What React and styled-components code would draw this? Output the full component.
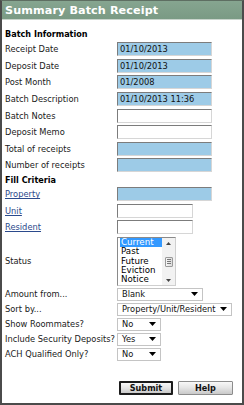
import React from "react";
import styled, { createGlobalStyle } from "styled-components";

const Global = createGlobalStyle`
  html, body { margin: 0; padding: 0; background: #fff; }
  body { font-family: "DejaVu Sans", Verdana, sans-serif; }
`;

const Panel = styled.div`
  box-sizing: border-box;
  width: 244px;
  height: 405px;
  border: 2px solid #4b4b4b;
  border-top: 1px solid #5e6e62;
  display: flex;
  flex-direction: column;
  background: #fff;
`;

const Header = styled.div`
  height: 18px;
  flex: none;
  background: linear-gradient(#86a590, #7a9a84);
  border-bottom: 1px solid #c9d4cc;
  color: #fff;
  font-weight: bold;
  font-size: 11.2px;
  display: flex;
  align-items: center;
  padding-left: 3px;
  letter-spacing: 0.1px;
`;

const Form = styled.div`
  padding: 7px 0 0 3px;
  display: flex;
  flex-direction: column;
  font-size: 8.3px;
  color: #1a1a1a;
`;

const Row = styled.div`
  display: flex;
  align-items: center;
  height: ${(p) => p.$h}px;
`;

const Heading = styled.div`
  font-weight: bold;
  color: #000;
  font-size: 8.1px;
  height: ${(p) => p.$h}px;
  display: flex;
  align-items: center;
`;

const Label = styled.div`
  width: 112px;
  flex: none;
  white-space: nowrap;
`;

const LinkLabel = styled.a`
  color: #2b4a8c;
  text-decoration: underline;
  cursor: pointer;
`;

const Field = styled.input`
  box-sizing: border-box;
  width: ${(p) => p.$w}px;
  height: 14px;
  margin: 0;
  padding: 0 2px;
  font-family: "DejaVu Sans", Verdana, sans-serif;
  font-size: 8.3px;
  color: #111;
  background: ${(p) => (p.$blue ? "#9dcbe7" : "#fff")};
  border: 1px solid;
  border-color: #7c7c7c #d6d6d6 #d6d6d6 #7c7c7c;
  outline: none;
`;

const ListBox = styled.div`
  box-sizing: border-box;
  width: 59px;
  height: 49px;
  border: 1px solid;
  border-color: #8a8a8a #cfcfcf #cfcfcf #8a8a8a;
  display: flex;
  background: #fff;
`;

const Options = styled.div`
  flex: 1;
  padding: 0 0 0 2px;
  display: flex;
  flex-direction: column;
  overflow: hidden;
`;

const Option = styled.div`
  flex: none;
  height: 9.4px;
  line-height: 9.4px;
  font-size: 8.7px;
  padding-left: 1px;
  color: ${(p) => (p.$sel ? "#fff" : "#000")};
  background: ${(p) => (p.$sel ? "#3399ff" : "transparent")};
`;

const ScrollBar = styled.div`
  width: 13px;
  flex: none;
  background: #f2f2f2;
  display: flex;
  flex-direction: column;
  align-items: center;
  justify-content: space-between;
  padding: 4px 0 3px;
  box-sizing: border-box;
`;

const Thumb = styled.div`
  width: 8px;
  height: 10px;
  box-sizing: border-box;
  border: 1px solid #9a9a9a;
  border-radius: 1px;
  background: linear-gradient(90deg, #f7f7f7, #dcdcdc);
  display: flex;
  flex-direction: column;
  justify-content: center;
  gap: 1px;
  padding: 0 1px;
`;

const Grip = styled.div`
  height: 1px;
  background: #777;
`;

const SelectBox = styled.div`
  box-sizing: border-box;
  width: ${(p) => p.$w}px;
  height: 13px;
  border: 1px solid #c4c4c4;
  background: #fff;
  display: flex;
  align-items: center;
  justify-content: space-between;
  padding: 0 4px 0 4px;
  color: #111;
  white-space: nowrap;
`;

const Buttons = styled.div`
  display: flex;
  gap: 5px;
  padding-left: 114px;
  margin-top: 19px;
`;

const Button = styled.button`
  box-sizing: border-box;
  width: ${(p) => p.$w}px;
  height: 14px;
  margin: 0;
  padding: 0;
  font-family: "DejaVu Sans", Verdana, sans-serif;
  font-weight: bold;
  font-size: 8.1px;
  color: #111;
  background: linear-gradient(#f8f8f8, #e4e4e4 50%, #c9c9c9);
  border: ${(p) => (p.$default ? "2px solid #1c1c1c" : "1px solid #8c8c8c")};
  border-radius: 1px;
`;

const Arrow = ({ up }) => (
  <svg width="5" height="3" viewBox="0 0 5 3">
    <polygon points={up ? "0,3 5,3 2.5,0" : "0,0 5,0 2.5,3"} fill="#444" />
  </svg>
);

const Caret = () => (
  <svg width="7" height="4" viewBox="0 0 7 4">
    <polygon points="0,0 7,0 3.5,4" fill="#000" />
  </svg>
);

const textRow = (label, w, value, blue) => (
  <Row $h={16.6} key={label}>
    <Label>{label}</Label>
    <Field $w={w} $blue={blue} defaultValue={value} readOnly />
  </Row>
);

export default function App() {
  return (
    <>
      <Global />
      <Panel>
        <Header>Summary Batch Receipt</Header>
        <Form>
          <Heading $h={14}>Batch Information</Heading>
          {textRow("Receipt Date", 95, "01/10/2013", true)}
          {textRow("Deposit Date", 95, "01/10/2013", true)}
          {textRow("Post Month", 95, "01/2008", true)}
          {textRow("Batch Description", 95, "01/10/2013 11:36", true)}
          {textRow("Batch Notes", 95, "", false)}
          {textRow("Deposit Memo", 95, "", false)}
          {textRow("Total of receipts", 95, "", true)}
          {textRow("Number of receipts", 95, "", true)}
          <Heading $h={12.2}>Fill Criteria</Heading>
          <Row $h={16.6}>
            <Label><LinkLabel>Property</LinkLabel></Label>
            <Field $w={95} $blue readOnly />
          </Row>
          <Row $h={16.6}>
            <Label><LinkLabel>Unit</LinkLabel></Label>
            <Field $w={76} readOnly />
          </Row>
          <Row $h={16.6}>
            <Label><LinkLabel>Resident</LinkLabel></Label>
            <Field $w={76} readOnly />
          </Row>
          <Row $h={51}>
            <Label>Status</Label>
            <ListBox>
              <Options>
                <Option $sel>Current</Option>
                <Option>Past</Option>
                <Option>Future</Option>
                <Option>Eviction</Option>
                <Option>Notice</Option>
              </Options>
              <ScrollBar>
                <Arrow up />
                <Thumb><Grip /><Grip /><Grip /></Thumb>
                <Arrow />
              </ScrollBar>
            </ListBox>
          </Row>
          <Row $h={15}>
            <Label>Amount from...</Label>
            <SelectBox $w={86}>Blank<Caret /></SelectBox>
          </Row>
          <Row $h={15}>
            <Label>Sort by...</Label>
            <SelectBox $w={115}>Property/Unit/Resident<Caret /></SelectBox>
          </Row>
          <Row $h={15}>
            <Label>Show Roommates?</Label>
            <SelectBox $w={44}>No<Caret /></SelectBox>
          </Row>
          <Row $h={15}>
            <Label>Include Security Deposits?</Label>
            <SelectBox $w={44}>Yes<Caret /></SelectBox>
          </Row>
          <Row $h={15}>
            <Label>ACH Qualified Only?</Label>
            <SelectBox $w={44}>No<Caret /></SelectBox>
          </Row>
          <Buttons>
            <Button $w={54} $default>Submit</Button>
            <Button $w={55}>Help</Button>
          </Buttons>
        </Form>
      </Panel>
    </>
  );
}
